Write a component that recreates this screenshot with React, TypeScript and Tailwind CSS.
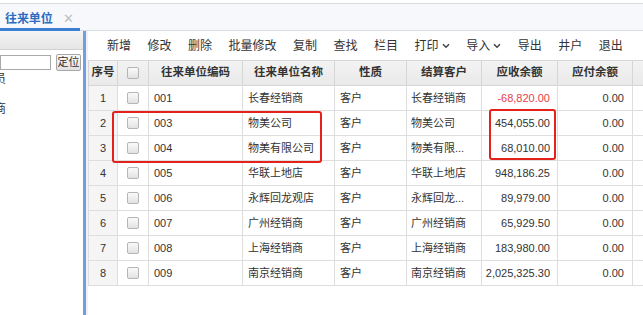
import React from "react";

const rows = [
  { n: 1, code: "001", name: "长春经销商", kind: "客户", cust: "长春经销商", ar: "-68,820.00", neg: true },
  { n: 2, code: "003", name: "物美公司", kind: "客户", cust: "物美公司", ar: "454,055.00" },
  { n: 3, code: "004", name: "物美有限公司", kind: "客户", cust: "物美有限...", ar: "68,010.00" },
  { n: 4, code: "005", name: "华联上地店", kind: "客户", cust: "华联上地店", ar: "948,186.25" },
  { n: 5, code: "006", name: "永辉回龙观店", kind: "客户", cust: "永辉回龙...", ar: "89,979.00" },
  { n: 6, code: "007", name: "广州经销商", kind: "客户", cust: "广州经销商", ar: "65,929.50" },
  { n: 7, code: "008", name: "上海经销商", kind: "客户", cust: "上海经销商", ar: "183,980.00" },
  { n: 8, code: "009", name: "南京经销商", kind: "客户", cust: "南京经销商", ar: "2,025,325.30" },
];

const tools: { t: string; dd?: boolean }[] = [
  { t: "新增" },
  { t: "修改" },
  { t: "删除" },
  { t: "批量修改" },
  { t: "复制" },
  { t: "查找" },
  { t: "栏目" },
  { t: "打印", dd: true },
  { t: "导入", dd: true },
  { t: "导出" },
  { t: "井户" },
  { t: "退出" },
];

function Chevron() {
  return (
    <svg width="8" height="6" viewBox="0 0 8 6" className="ml-[3px]">
      <path d="M1 1.2 L4 4.2 L7 1.2" fill="none" stroke="#444" strokeWidth="1.5" />
    </svg>
  );
}

function Check() {
  return (
    <div className="mx-auto h-[12px] w-[12px] rounded-[2px] border border-[#b5b5b5] bg-gradient-to-b from-[#fafafa] to-[#e2e2e2]" />
  );
}

const th = "border border-[#d6d6d6] px-0 text-center font-bold text-[11.5px] text-[#333] whitespace-nowrap";
const td = "border border-[#dedede] text-[11px] text-[#333] whitespace-nowrap overflow-hidden";

export default function App() {
  return (
    <div
      className="relative h-[315px] w-[643px] overflow-hidden bg-white text-[#333]"
      style={{ fontFamily: '"Liberation Sans", "Noto Sans CJK SC", sans-serif' }}
    >
      {/* tab bar */}
      <div className="h-[3px] bg-white" />
      <div className="flex h-[28px] items-end border-t border-[#dcdcdc] bg-[#f6f8fb]">
        <div className="flex h-full w-[80px] flex-col">
          <div className="flex flex-1 items-center pl-[5px] pt-[5px]">
            <span className="text-[12px] font-bold tracking-[-0.1px] text-[#2d6bc0]">往来单位</span>
            <span className="ml-[10px] text-[13px] leading-none text-[#c0c0c0]">✕</span>
          </div>
          <div className="h-[3px] bg-[#3c7fd5]" />
        </div>
        <div className="h-[1px] flex-1 bg-[#d8dde5]" />
      </div>

      <div className="flex h-[284px]">
        {/* left panel */}
        <div className="w-[83px] shrink-0">
          <div className="h-[19px] border-b border-[#d0d0d0] bg-gradient-to-b from-[#f4f4f4] to-[#e6e6e6]" />
          <div className="flex items-center pt-[4px]">
            <div className="h-[15px] w-[51px] border border-[#a9a9a9] bg-white" />
            <div className="ml-[5px] flex h-[17px] w-[25px] items-center justify-center whitespace-nowrap rounded-[2px] border border-[#a8a8a8] bg-gradient-to-b from-[#fafafa] to-[#e0e0e0] text-[11px] leading-none text-[#333]">
              定位
            </div>
          </div>
          <div className="mt-[2px] overflow-hidden">
            <div className="ml-[-6px] h-[12px] text-[12px] leading-[12px]">员</div>
            <div className="ml-[-6px] mt-[18px] h-[12px] text-[12px] leading-[12px]">商</div>
          </div>
        </div>
        <div className="w-[3px] shrink-0 bg-[#6f9fe0]" />
        <div className="w-[2px] shrink-0 bg-[#eef1f5]" />

        {/* main */}
        <div className="min-w-0 flex-1 overflow-hidden">
          <div className="flex h-[29px] items-center gap-[16.5px] pl-[19px] text-[12px] text-[#333]">
            {tools.map((t) => (
              <div key={t.t} className="flex shrink-0 items-center whitespace-nowrap">
                <span>{t.t}</span>
                {t.dd && <Chevron />}
              </div>
            ))}
          </div>
          <table className="table-fixed border-collapse" style={{ width: 564 }}>
            <colgroup>
              <col style={{ width: 29 }} />
              <col style={{ width: 31 }} />
              <col style={{ width: 94 }} />
              <col style={{ width: 92 }} />
              <col style={{ width: 72 }} />
              <col style={{ width: 75 }} />
              <col style={{ width: 76 }} />
              <col style={{ width: 75 }} />
              <col style={{ width: 20 }} />
            </colgroup>
            <thead>
              <tr className="h-[25px] bg-gradient-to-b from-[#f3f3f3] to-[#e9e9e9]">
                <th className={th}>序号</th>
                <th className={th}>
                  <Check />
                </th>
                <th className={th}>往来单位编码</th>
                <th className={th}>往来单位名称</th>
                <th className={th}>性质</th>
                <th className={th}>结算客户</th>
                <th className={th}>应收余额</th>
                <th className={th}>应付余额</th>
                <th className={th}></th>
              </tr>
            </thead>
            <tbody>
              {rows.map((r) => (
                <tr key={r.n} className="h-[25px]">
                  <td className={`${td} bg-[#f5f5f5] text-center`}>{r.n}</td>
                  <td className={td}>
                    <Check />
                  </td>
                  <td className={`${td} pl-[5px]`}>{r.code}</td>
                  <td className={`${td} pl-[5px]`}>{r.name}</td>
                  <td className={`${td} pl-[5px]`}>{r.kind}</td>
                  <td className={`${td} pl-[4px]`}>{r.cust}</td>
                  <td className={`${td} pr-[7px] text-right ${r.neg ? "text-[#e8404a]" : ""}`}>{r.ar}</td>
                  <td className={`${td} pr-[8px] text-right`}>0.00</td>
                  <td className={td}></td>
                </tr>
              ))}
            </tbody>
          </table>
        </div>
      </div>

      {/* highlight boxes */}
      <div className="pointer-events-none absolute left-[112px] top-[111px] h-[52px] w-[210px] rounded-[3px] border-2 border-[#e3221c]" />
      <div className="pointer-events-none absolute left-[489px] top-[109px] h-[51px] w-[67px] rounded-[3px] border-2 border-[#e3221c]" />
    </div>
  );
}
